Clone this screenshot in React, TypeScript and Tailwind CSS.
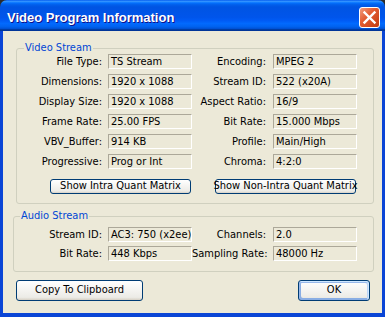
import React from "react";

const videoRows = [
  ["File Type:", "TS Stream", "Encoding:", "MPEG 2"],
  ["Dimensions:", "1920 x 1088", "Stream ID:", "522 (x20A)"],
  ["Display Size:", "1920 x 1088", "Aspect Ratio:", "16/9"],
  ["Frame Rate:", "25.00 FPS", "Bit Rate:", "15.000 Mbps"],
  ["VBV_Buffer:", "914 KB", "Profile:", "Main/High"],
  ["Progressive:", "Prog or Int", "Chroma:", "4:2:0"],
];

const audioRows = [
  ["Stream ID:", "AC3: 750 (x2ee)", "Channels:", "2.0"],
  ["Bit Rate:", "448 Kbps", "Sampling Rate:", "48000 Hz"],
];

function Field({ value }: { value: string }) {
  return (
    <div className="h-[15px] w-[84px] border border-t-[#aca899] border-l-[#aca899] border-b-white border-r-white pl-[2px] leading-[13px] whitespace-nowrap overflow-hidden">
      {value}
    </div>
  );
}

function Row({ cells, firstLabel }: { cells: string[]; firstLabel: string }) {
  return (
    <div className="flex items-center h-[15px]">
      <div className={`${firstLabel} text-right whitespace-nowrap leading-[13px]`}>{cells[0]}</div>
      <div className="ml-[6px]">
        <Field value={cells[1]} />
      </div>
      <div className="w-[74px] text-right whitespace-nowrap leading-[13px]">{cells[2]}</div>
      <div className="ml-[7px]">
        <Field value={cells[3]} />
      </div>
    </div>
  );
}

function XpButton({ label, className }: { label: string; className: string }) {
  return (
    <button
      className={`${className} flex items-center justify-center rounded-[3px] border border-[#003c74] bg-[linear-gradient(180deg,#ffffff,#ecebe6_86%,#d6d0c5)] text-black whitespace-nowrap`}
    >
      {label}
    </button>
  );
}

export default function App() {
  return (
    <div className="w-[385px] h-[317px] bg-[#2b2b2b] flex flex-col text-[11px] text-black font-['DejaVu_Sans_Condensed','Liberation_Sans',sans-serif]">
      {/* Title bar */}
      <div className="h-[31px] shrink-0 rounded-t-[7px] flex items-center pt-[4px] pl-[7px] pr-[5px] bg-[linear-gradient(180deg,#0058ee_0%,#3593ff_4%,#288eff_6%,#127dff_8%,#036ffc_10%,#0262ee_14%,#0057e5_20%,#0054e3_24%,#0055eb_56%,#005bf5_66%,#026afe_76%,#0062ef_86%,#0052d6_92%,#0040ab_94%,#003092_100%)]">
        <span className="flex-1 text-white font-bold text-[13px] font-['Liberation_Sans',sans-serif] [text-shadow:1px_1px_#0f1089]">
          Video Program Information
        </span>
        <button className="w-[21px] h-[21px] rounded-[3px] border border-white bg-[linear-gradient(135deg,#f29c7e,#e35d33_40%,#c23b10)] flex items-center justify-center">
          <svg width="15" height="15" viewBox="0 0 15 15">
            <path d="M2.5 2.5 L12.5 12.5 M12.5 2.5 L2.5 12.5" stroke="white" strokeWidth="2.4" strokeLinecap="square" />
          </svg>
        </button>
      </div>

      {/* Body */}
      <div className="flex-1 flex flex-col bg-[#ece9d8] border-x-[3px] border-b-[4px] border-[#0a45d6]">
        {/* Video Stream */}
        <fieldset className="mt-[11px] ml-[13px] mr-[8px] border border-[#d0d0bf] rounded-[3px] pb-[9px]">
          <legend className="ml-[7px] px-[1px] leading-[12px] text-[#0046d5]">Video Stream</legend>
          <div className="flex flex-col gap-[5px]">
            {videoRows.map((r, i) => (
              <Row key={i} cells={r} firstLabel="w-[85px]" />
            ))}
          </div>
          <div className="flex mt-[10px]">
            <XpButton label="Show Intra Quant Matrix" className="ml-[33px] w-[141px] h-[15px]" />
            <XpButton label="Show Non-Intra Quant Matrix" className="ml-[24px] w-[141px] h-[15px] border-[#1c1c1c]" />
          </div>
        </fieldset>

        {/* Audio Stream */}
        <fieldset className="mt-[6px] ml-[10px] mr-[8px] border border-[#d0d0bf] rounded-[3px] pt-[5px] pb-[10px]">
          <legend className="ml-[6px] px-[1px] leading-[12px] text-[#0046d5]">Audio Stream</legend>
          <div className="flex flex-col gap-[4px]">
            {audioRows.map((r, i) => (
              <Row key={i} cells={r} firstLabel="w-[88px]" />
            ))}
          </div>
        </fieldset>

        <div className="flex justify-between mt-[8px] ml-[13px] mr-[12px]">
          <XpButton label="Copy To Clipboard" className="w-[127px] h-[21px]" />
          <XpButton
            label="OK"
            className="w-[72px] h-[21px] shadow-[inset_-1px_1px_#cee7ff,inset_1px_2px_#98b8ea,inset_-2px_2px_#bcd4f6,inset_1px_-1px_#89ade4,inset_2px_-2px_#89ade4]"
          />
        </div>
      </div>
    </div>
  );
}
